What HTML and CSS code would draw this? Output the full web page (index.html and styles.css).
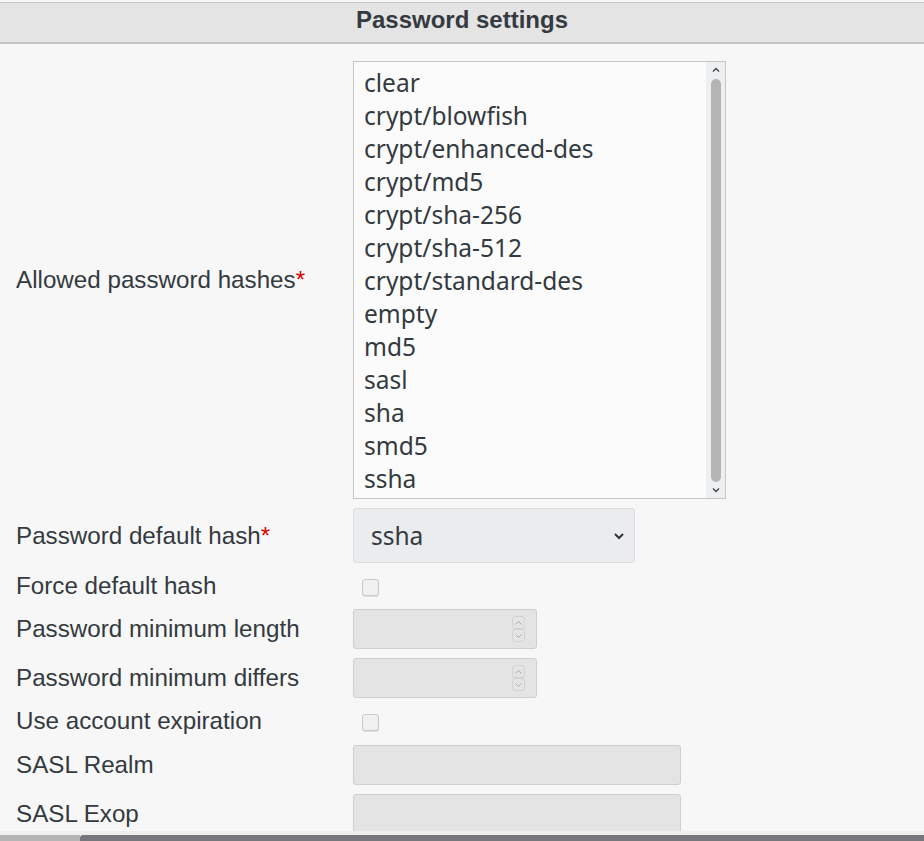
FILE: index.html
```html
<!DOCTYPE html>
<html>
<head>
<meta charset="utf-8">
<link rel="stylesheet" href="styles.css">
</head>
<body>
<div class="page">
  <div class="header">Password settings</div>
  <div class="viewport">
  <div class="form">
    <div class="label">Allowed password hashes<span class="req">*</span></div>
    <div class="control">
      <div class="listbox">
        <div class="options">
          <div class="opt">clear</div>
          <div class="opt">crypt/blowfish</div>
          <div class="opt">crypt/enhanced-des</div>
          <div class="opt">crypt/md5</div>
          <div class="opt">crypt/sha-256</div>
          <div class="opt">crypt/sha-512</div>
          <div class="opt">crypt/standard-des</div>
          <div class="opt">empty</div>
          <div class="opt">md5</div>
          <div class="opt">sasl</div>
          <div class="opt">sha</div>
          <div class="opt">smd5</div>
          <div class="opt">ssha</div>
        </div>
        <div class="vscroll">
          <svg class="arrow" width="10" height="8" viewBox="0 0 10 8"><path d="M2 5.5 L5 2.5 L8 5.5" fill="none" stroke="#444" stroke-width="1.4"/></svg>
          <div class="thumb"></div>
          <svg class="arrow" width="10" height="8" viewBox="0 0 10 8"><path d="M2 2.5 L5 5.5 L8 2.5" fill="none" stroke="#444" stroke-width="1.4"/></svg>
        </div>
      </div>
    </div>

    <div class="label">Password default hash<span class="req">*</span></div>
    <div class="control">
      <div class="select">
        <span>ssha</span>
        <svg width="12" height="8" viewBox="0 0 12 8"><path d="M2 2 L6 6 L10 2" fill="none" stroke="#333" stroke-width="2"/></svg>
      </div>
    </div>

    <div class="label top">Force default hash</div>
    <div class="control top"><div class="checkbox"></div></div>

    <div class="label">Password minimum length</div>
    <div class="control">
      <div class="number">
        <div class="spin">
          <div class="spinbtn"><svg width="9" height="6" viewBox="0 0 9 6"><path d="M1.5 4.5 L4.5 1.5 L7.5 4.5" fill="none" stroke="#aaa" stroke-width="1"/></svg></div>
          <div class="spinbtn"><svg width="9" height="6" viewBox="0 0 9 6"><path d="M1.5 1.5 L4.5 4.5 L7.5 1.5" fill="none" stroke="#aaa" stroke-width="1"/></svg></div>
        </div>
      </div>
    </div>

    <div class="label">Password minimum differs</div>
    <div class="control">
      <div class="number">
        <div class="spin">
          <div class="spinbtn"><svg width="9" height="6" viewBox="0 0 9 6"><path d="M1.5 4.5 L4.5 1.5 L7.5 4.5" fill="none" stroke="#aaa" stroke-width="1"/></svg></div>
          <div class="spinbtn"><svg width="9" height="6" viewBox="0 0 9 6"><path d="M1.5 1.5 L4.5 4.5 L7.5 1.5" fill="none" stroke="#aaa" stroke-width="1"/></svg></div>
        </div>
      </div>
    </div>

    <div class="label top">Use account expiration</div>
    <div class="control top tall"><div class="checkbox"></div></div>

    <div class="label">SASL Realm</div>
    <div class="control"><div class="text"></div></div>

    <div class="label">SASL Exop</div>
    <div class="control"><div class="text"></div></div>
  </div>
  </div>
  <div class="hscroll">
    <div class="hs-track"></div>
    <div class="hs-bar"><div class="hs-left"></div><div class="hs-thumb"></div></div>
  </div>
</div>
</body>
</html>
```

FILE: styles.css
```css
html, body {
  margin: 0;
  padding: 0;
  background: #f7f7f7;
}
.page {
  height: 841px;
  display: flex;
  flex-direction: column;
  overflow: hidden;
  font-family: "Liberation Sans", Arial, sans-serif;
  color: #343a40;
}
.header {
  margin-top: 2px;
  height: 39px;
  border-top: 1px solid #c4c4c4;
  border-bottom: 2px solid #c4c4c4;
  background: #e4e4e4;
  text-align: center;
  font-weight: bold;
  font-size: 24px;
  line-height: 33px;
  color: #343a40;
  flex: none;
}
.viewport {
  flex: 1;
  min-height: 0;
  overflow: hidden;
}
.form {
  display: grid;
  grid-template-columns: 337px 1fr;
  grid-auto-rows: auto;
  row-gap: 9px;
  align-items: center;
  padding: 17px 0 0 16px;
}
.label {
  font-size: 24.2px;
  line-height: 28px;
  white-space: nowrap;
}
.req { color: #dd0000; }
.control {
  min-height: 38px;
  display: flex;
  align-items: center;
}
.top { align-self: start; }
.control.top {
  height: 28px;
  min-height: 0;
  align-items: flex-start;
  padding-top: 7px;
  box-sizing: border-box;
}
.control.top.tall {
  height: 29px;
}
.listbox {
  width: 371px;
  height: 436px;
  border: 1px solid #c6c6c6;
  background: #fbfbfb;
  display: flex;
  overflow: hidden;
}
.options {
  flex: 1;
  padding: 4px 0 0 10px;
  font-family: "Noto Sans", "Open Sans", sans-serif;
  font-size: 24.5px;
  color: #333a40;
}
.opt {
  height: 33px;
  line-height: 33px;
  white-space: nowrap;
}
.vscroll {
  width: 19px;
  background: #eeeff0;
  display: flex;
  flex-direction: column;
  align-items: center;
  padding: 4px 0;
  box-sizing: border-box;
}
.arrow { flex: none; }
.thumb {
  flex: 1;
  width: 10px;
  margin: 5px 0 4px;
  border-radius: 5px;
  background: #b4b4b4;
}
.select {
  height: 53px;
  border: 1px solid #dadcde;
  border-radius: 3px;
  background: #ebecee;
  display: flex;
  align-items: center;
  justify-content: space-between;
  padding: 0 9px 0 17px;
  width: 254px;
  font-family: "Noto Sans", "Open Sans", sans-serif;
  font-size: 24.5px;
  color: #333a40;
}
.checkbox {
  width: 15px;
  height: 15px;
  margin-left: 9px;
  border: 1px solid #c9c9c9;
  border-radius: 3px;
  background: #eff0f2;
  box-shadow: 0 1px 0 #dedede;
}
.number {
  height: 38px;
  border: 1px solid #cfcfcf;
  border-radius: 3px;
  background: #e4e4e4;
  display: flex;
  align-items: center;
  justify-content: flex-end;
  padding-right: 11px;
  width: 171px;
}
.spin {
  display: flex;
  flex-direction: column;
}
.spinbtn {
  width: 11px;
  height: 11px;
  border: 1px solid #d2d2d2;
  border-radius: 3px;
  display: flex;
  align-items: center;
  justify-content: center;
}
.text {
  width: 326px;
  height: 38px;
  border: 1px solid #cfcfcf;
  border-radius: 3px;
  background: #e4e4e4;
}
.hscroll {
  flex: none;
  height: 10px;
  display: flex;
  flex-direction: column;
}
.hs-track {
  height: 4px;
  background: #eeeeee;
}
.hs-bar {
  flex: 1;
  display: flex;
}
.hs-left {
  width: 80px;
  background: #b4b4b4;
}
.hs-thumb {
  flex: 1;
  background: #75777b;
  border-top-left-radius: 3px;
}
```
